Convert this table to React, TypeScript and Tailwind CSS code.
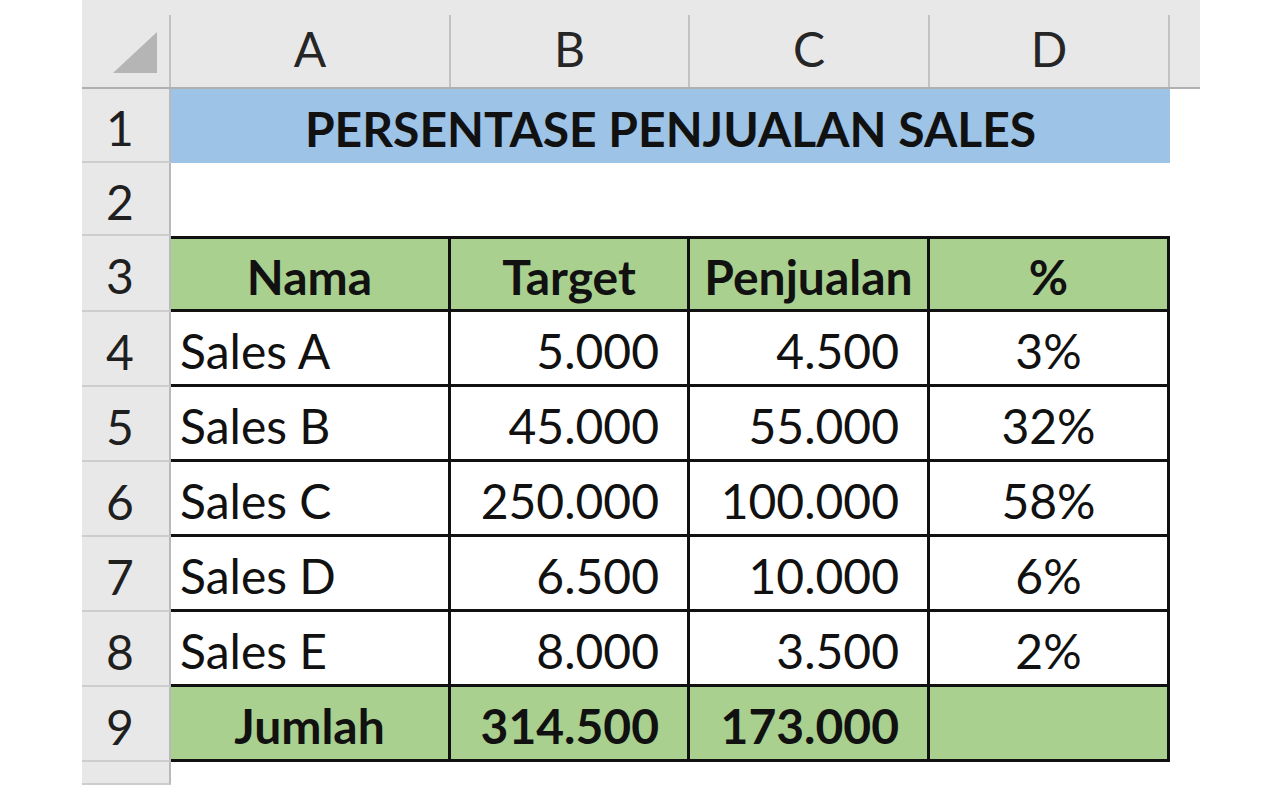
import React from "react";

const COLS = [
  { key: "A", w: "w-[280px]" },
  { key: "B", w: "w-[239px]" },
  { key: "C", w: "w-[240px]" },
  { key: "D", w: "w-[240px]" },
];

type Cell = { text: string; align: "left" | "right" | "center"; bold?: boolean };

const rows: { n: number; cells: Cell[]; green?: boolean; h: string; top?: boolean }[] = [
  {
    n: 3,
    green: true,
    top: true,
    h: "h-[76px]",
    cells: [
      { text: "Nama", align: "center", bold: true },
      { text: "Target", align: "center", bold: true },
      { text: "Penjualan", align: "center", bold: true },
      { text: "%", align: "center", bold: true },
    ],
  },
  { n: 4, h: "h-[75px]", cells: [{ text: "Sales A", align: "left" }, { text: "5.000", align: "right" }, { text: "4.500", align: "right" }, { text: "3%", align: "center" }] },
  { n: 5, h: "h-[75px]", cells: [{ text: "Sales B", align: "left" }, { text: "45.000", align: "right" }, { text: "55.000", align: "right" }, { text: "32%", align: "center" }] },
  { n: 6, h: "h-[75px]", cells: [{ text: "Sales C", align: "left" }, { text: "250.000", align: "right" }, { text: "100.000", align: "right" }, { text: "58%", align: "center" }] },
  { n: 7, h: "h-[75px]", cells: [{ text: "Sales D", align: "left" }, { text: "6.500", align: "right" }, { text: "10.000", align: "right" }, { text: "6%", align: "center" }] },
  { n: 8, h: "h-[75px]", cells: [{ text: "Sales E", align: "left" }, { text: "8.000", align: "right" }, { text: "3.500", align: "right" }, { text: "2%", align: "center" }] },
  {
    n: 9,
    green: true,
    h: "h-[75px]",
    cells: [
      { text: "Jumlah", align: "center", bold: true },
      { text: "314.500", align: "right", bold: true },
      { text: "173.000", align: "right", bold: true },
      { text: "", align: "center", bold: true },
    ],
  },
];

function RowHeader({ n }: { n?: number }) {
  return (
    <div className="w-[89px] shrink-0 bg-[#e8e8e8] border-r-2 border-r-[#b9b9b9] border-b-2 border-b-[#cdcdcd] flex items-center justify-center pt-[6px] pr-[11px] text-[#1f1f1f]">
      {n !== undefined ? n : ""}
    </div>
  );
}

export default function App() {
  return (
    <div
      className="w-[1283px] h-[785px] bg-white overflow-hidden flex text-[48px] leading-none"
      style={{ fontFamily: "Lato, 'Open Sans', sans-serif" }}
    >
      <div className="ml-[82px] w-[1118px] flex flex-col">
        {/* Column header */}
        <div className="h-[89px] shrink-0 flex bg-[#e8e8e8] border-b-2 border-[#b0b0b0]">
          <div className="w-[89px] shrink-0 flex">
            <div className="flex-1 pl-[31px] pt-[32px]">
              <svg width="44" height="41" viewBox="0 0 44 41">
                <polygon points="44,0 44,41 0,41" fill="#b5b5b5" />
              </svg>
            </div>
            <div className="w-[2px] h-[72px] self-end bg-[#c2c2c2]" />
          </div>
          {COLS.map((c) => (
            <div key={c.key} className={`${c.w} shrink-0 flex`}>
              <div className="flex-1 flex items-center justify-center pt-[10px] text-[#262626]">{c.key}</div>
              <div className="w-[2px] h-[72px] self-end bg-[#c2c2c2]" />
            </div>
          ))}
          <div className="flex-1" />
        </div>

        {/* Row 1 */}
        <div className="h-[74px] shrink-0 flex">
          <RowHeader n={1} />
          <div className="w-[999px] shrink-0 bg-[#9dc3e6] flex items-center justify-center pt-[6px] font-bold text-[#111]">
            PERSENTASE PENJUALAN SALES
          </div>
        </div>

        {/* Row 2 */}
        <div className="h-[73px] shrink-0 flex">
          <RowHeader n={2} />
        </div>

        {rows.map((r) => (
          <div key={r.n} className={`${r.h} shrink-0 flex`}>
            <RowHeader n={r.n} />
            {r.cells.map((c, i) => (
              <div
                key={i}
                className={`${COLS[i].w} shrink-0 flex items-center whitespace-nowrap border-r-[3px] border-b-[3px] border-[#111] pt-[6px] text-[#111] ${
                  r.top ? "border-t-[3px]" : ""
                } ${r.green ? "bg-[#a9d08e]" : "bg-white"} ${c.bold ? "font-bold" : ""} ${
                  c.align === "left" ? "justify-start pl-[9px]" : c.align === "right" ? "justify-end pr-[28px]" : "justify-center"
                }`}
              >
                {c.text}
              </div>
            ))}
          </div>
        ))}

        {/* Row 10 */}
        <div className="flex-1 flex">
          <RowHeader />
        </div>
      </div>
    </div>
  );
}
